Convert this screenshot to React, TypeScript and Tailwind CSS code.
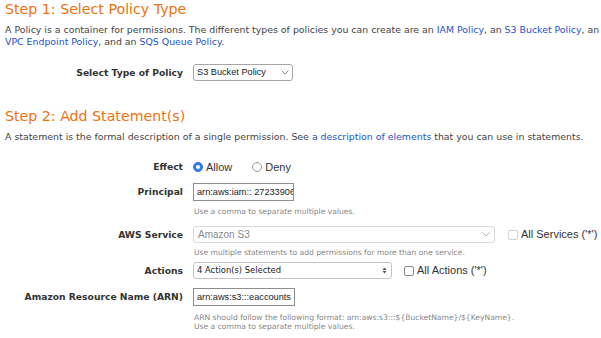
import React from "react";

const V = { fontFamily: '"DejaVu Sans", Verdana, sans-serif' };
const A = { fontFamily: '"Liberation Sans", Arial, Helvetica, sans-serif' };

function Chevron({ color = "#888" }: { color?: string }) {
  return (
    <svg width="8" height="5" viewBox="0 0 8 5" fill="none">
      <path d="M0.5 0.5 L4 4 L7.5 0.5" stroke={color} strokeWidth="0.9" />
    </svg>
  );
}

function UpDown() {
  return (
    <svg width="5" height="7" viewBox="0 0 5 7">
      <path d="M2.5 0.5 L4.5 3 L0.5 3 Z" fill="#555" />
      <path d="M0.5 4 L4.5 4 L2.5 6.5 Z" fill="#555" />
    </svg>
  );
}

function Radio({ checked }: { checked?: boolean }) {
  return checked ? (
    <span className="w-[10px] h-[10px] rounded-full bg-[#2f7df6] border border-[#2a6fd8] flex items-center justify-center">
      <span className="w-[4px] h-[4px] rounded-full bg-white" />
    </span>
  ) : (
    <span className="w-[10px] h-[10px] rounded-full bg-white border border-[#9a9a9a]" />
  );
}

function Check({ light }: { light?: boolean }) {
  return (
    <span
      className={
        "w-[10px] h-[10px] rounded-[2px] bg-white border " +
        (light ? "border-[#d2d2d2]" : "border-[#8a8a8a]")
      }
    />
  );
}

function Label({ children }: { children: React.ReactNode }) {
  return (
    <div className="w-[183px] shrink-0 whitespace-nowrap text-right font-bold text-[9.2px] text-[#333]" style={V}>
      {children}
    </div>
  );
}

function Help({ children }: { children: React.ReactNode }) {
  return (
    <div className="flex">
      <div className="w-[194px] shrink-0" />
      <div className="text-[7.6px] leading-[9px] text-[#888]" style={V}>
        {children}
      </div>
    </div>
  );
}

const Link = ({ children }: { children: React.ReactNode }) => (
  <span className="text-[#1f52c4]">{children}</span>
);

export default function App() {
  return (
    <div className="w-[601px] h-[338px] overflow-hidden bg-white">
      <div className="w-[800px] pl-[5px] text-[#444]" style={V}>
        <h2 className="text-[14.2px] leading-[18px] text-[#ec7211]">Step 1: Select Policy Type</h2>
        <p className="mt-[6px] text-[9.4px] leading-[12px] whitespace-nowrap">
          A Policy is a container for permissions. The different types of policies you can create are an{" "}
          <Link>IAM Policy</Link>, an <Link>S3 Bucket Policy</Link>, an <Link>SNS Topic Policy</Link>, a
          <br />
          <Link>VPC Endpoint Policy</Link>, and an <Link>SQS Queue Policy</Link>.
        </p>

        <div className="-ml-[5px] mt-[16px] flex items-center gap-[10px]">
          <Label>Select Type of Policy</Label>
          <div
            className="w-[100px] h-[17px] border border-[#a6a6a6] rounded-[3px] flex items-center justify-between pl-[3px] pr-[3px] text-[9.2px] text-[#222]"
            style={A}
          >
            <span>S3 Bucket Policy</span>
            <Chevron />
          </div>
        </div>

        <h2 className="mt-[26px] text-[14.2px] leading-[18px] text-[#ec7211]">Step 2: Add Statement(s)</h2>
        <p className="mt-[6px] text-[9.4px] leading-[12px] whitespace-nowrap">
          A statement is the formal description of a single permission. See{" "}
          <Link>a description of elements</Link> that you can use in statements.
        </p>

        <div className="-ml-[5px]">
          <div className="mt-[17px] h-[14px] flex items-center gap-[10px]">
            <Label>Effect</Label>
            <div className="flex items-center text-[11px] text-[#333]" style={A}>
              <Radio checked />
              <span className="ml-[3px]">Allow</span>
              <span className="ml-[20px]" />
              <Radio />
              <span className="ml-[3px]">Deny</span>
            </div>
          </div>

          <div className="mt-[9px] flex items-center gap-[10px]">
            <Label>Principal</Label>
            <div
              className="w-[101px] h-[18px] border border-[#8e8e8e] overflow-hidden whitespace-nowrap pl-[3px] text-[9.2px] leading-[16px] text-[#222]"
              style={A}
            >
              arn:aws:iam:: 272339068
            </div>
          </div>
          <div className="mt-[6px]">
            <Help>Use a comma to separate multiple values.</Help>
          </div>

          <div className="mt-[10px] flex items-center gap-[10px]">
            <Label>AWS Service</Label>
            <div
              className="w-[302px] h-[17px] border border-[#d9d9d9] rounded-[3px] flex items-center justify-between pl-[4px] pr-[4px] text-[10px] text-[#8a8a8a]"
              style={A}
            >
              <span>Amazon S3</span>
              <Chevron color="#aaa" />
            </div>
            <div className="ml-[3px] flex items-center gap-[3px] text-[11px] text-[#333]" style={A}>
              <Check light />
              <span>All Services ('*')</span>
            </div>
          </div>
          <div className="mt-[5px]">
            <Help>Use multiple statements to add permissions for more than one service.</Help>
          </div>

          <div className="mt-[5px] flex items-center gap-[10px]">
            <Label>Actions</Label>
            <div
              className="w-[199px] h-[17px] border border-[#c4c4c4] rounded-[3px] flex items-center justify-between pl-[3px] pr-[4px] text-[8.4px] text-[#222]"
              style={V}
            >
              <span>4 Action(s) Selected</span>
              <UpDown />
            </div>
            <div className="ml-[2px] flex items-center gap-[3px] text-[11px] text-[#333]" style={A}>
              <Check />
              <span>All Actions ('*')</span>
            </div>
          </div>

          <div className="mt-[9px] flex items-center gap-[10px]">
            <Label>Amazon Resource Name (ARN)</Label>
            <div
              className="w-[102px] h-[18px] border border-[#8e8e8e] overflow-hidden whitespace-nowrap pl-[3px] text-[9.2px] leading-[16px] text-[#222]"
              style={A}
            >
              arn:aws:s3:::eaccounts
            </div>
          </div>
          <div className="mt-[7px]">
            <Help>
              ARN should follow the following format: arn:aws:s3:::${"{"}BucketName{"}"}/${"{"}KeyName{"}"}.
              <br />
              Use a comma to separate multiple values.
            </Help>
          </div>
        </div>
      </div>
    </div>
  );
}
